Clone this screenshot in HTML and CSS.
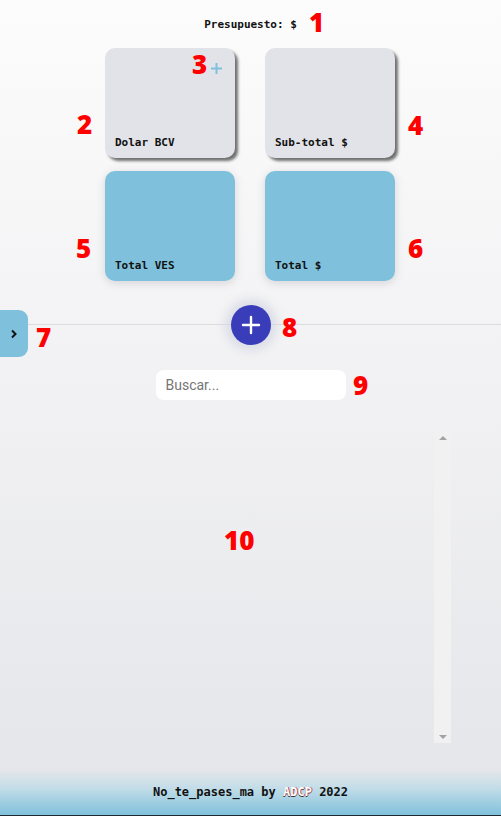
FILE: index.html
```html
<!DOCTYPE html>
<html lang="es">
<head>
<meta charset="utf-8">
<title>No_te_pases_ma</title>
<link rel="stylesheet" href="styles.css">
</head>
<body>
<div class="page">
  <header class="budget">Presupuesto: $</header>

  <section class="cards">
    <div class="card card-gray">
      <svg class="card-plus" width="13" height="13" viewBox="0 0 13 13"><path d="M6.5 1v11M1 6.5h11" stroke="#7fc1dc" stroke-width="2" fill="none"/></svg>
      <span class="card-label">Dolar BCV</span>
    </div>
    <div class="card card-gray"><span class="card-label">Sub-total $</span></div>
    <div class="card card-blue"><span class="card-label">Total VES</span></div>
    <div class="card card-blue"><span class="card-label">Total $</span></div>
  </section>

  <div class="divider">
    <button class="fab" aria-label="Agregar">
      <svg width="20" height="20" viewBox="0 0 20 20"><path d="M10 2v16M2 10h16" stroke="#fff" stroke-width="2.4" stroke-linecap="round" fill="none"/></svg>
    </button>
  </div>

  <button class="drawer-tab" aria-label="Abrir">
    <svg width="8" height="10" viewBox="0 0 8 10"><path d="M2 1.5l3.5 3.5L2 8.5" stroke="#111" stroke-width="2" fill="none"/></svg>
  </button>

  <div class="search-row">
    <input class="search" type="text" placeholder="Buscar...">
  </div>

  <div class="list">
    <div class="scrollbar">
      <span class="arrow arrow-up"></span>
      <span class="arrow arrow-down"></span>
    </div>
  </div>

  <footer class="footer">No_te_pases_ma by <span class="brand">ADCP</span> 2022</footer>

  <span class="note n1">1</span>
  <span class="note n2">2</span>
  <span class="note n3">3</span>
  <span class="note n4">4</span>
  <span class="note n5">5</span>
  <span class="note n6">6</span>
  <span class="note n7">7</span>
  <span class="note n8">8</span>
  <span class="note n9">9</span>
  <span class="note n10">10</span>
</div>
</body>
</html>
```
FILE: styles.css
```css
* { box-sizing: border-box; }
html, body { margin: 0; padding: 0; }
body {
  width: 501px;
  height: 816px;
  overflow: hidden;
  font-family: "DejaVu Sans Mono", "Liberation Mono", monospace;
}
.page {
  position: relative;
  width: 501px;
  height: 816px;
  display: flex;
  flex-direction: column;
  background: linear-gradient(180deg, #fcfcfc 0%, #f2f2f4 45%, #e4e5e9 100%);
}
.budget {
  padding-top: 18px;
  height: 48px;
  text-align: center;
  font-size: 11px;
  font-weight: bold;
  line-height: 14px;
  color: #111;
}
.cards {
  display: grid;
  grid-template-columns: 130px 130px;
  grid-auto-rows: 110px;
  column-gap: 30px;
  row-gap: 13px;
  justify-content: center;
  padding-right: 1px;
}
.card {
  position: relative;
  border-radius: 10px;
  display: flex;
  align-items: flex-end;
  padding: 0 10px 8px;
}
.card-gray {
  background: #e2e3e8;
  box-shadow: 3px 3px 3px rgba(0,0,0,0.55);
}
.card-blue {
  background: #7fc1dc;
  box-shadow: 0 2px 8px rgba(120,120,140,0.25);
}
.card-label {
  font-size: 11px;
  font-weight: bold;
  line-height: 14px;
  color: #111;
}
.card-plus {
  position: absolute;
  top: 14px;
  right: 12px;
}
.divider {
  margin-top: 24px;
  height: 40px;
  display: flex;
  justify-content: center;
  background: linear-gradient(180deg, transparent 19px, #dcdcdf 19px, #dcdcdf 20px, transparent 20px);
}
.fab {
  width: 40px;
  height: 40px;
  border-radius: 50%;
  border: none;
  padding: 0;
  background: #3a3dba;
  display: flex;
  align-items: center;
  justify-content: center;
  box-shadow: 0 0 10px 6px rgba(210,212,225,0.7);
}
.drawer-tab {
  position: absolute;
  left: 0;
  top: 310px;
  width: 28px;
  height: 47px;
  border: none;
  padding: 0;
  border-radius: 0 9px 9px 0;
  background: #7fc1dc;
  display: flex;
  align-items: center;
  justify-content: center;
}
.search-row {
  margin-top: 25px;
  display: flex;
  justify-content: center;
}
.search {
  width: 190px;
  height: 30px;
  border: none;
  border-radius: 8px;
  background: #fff;
  padding: 0 10px;
  font-family: "Roboto", "Liberation Sans", sans-serif;
  font-size: 14px;
  color: #333;
  outline: none;
}
.search::placeholder { color: #757575; }
.list {
  margin-top: 32px;
  height: 311px;
  display: flex;
  justify-content: flex-end;
  padding-right: 50px;
}
.scrollbar {
  width: 17px;
  height: 100%;
  background: #f1f1f1;
  display: flex;
  flex-direction: column;
  justify-content: space-between;
  align-items: center;
  padding: 4px 0;
}
.arrow {
  width: 0;
  height: 0;
  border-left: 4px solid transparent;
  border-right: 4px solid transparent;
}
.arrow-up { border-bottom: 4px solid #a3a3a3; }
.arrow-down { border-top: 4px solid #a3a3a3; }
.footer {
  margin-top: auto;
  height: 46px;
  padding-top: 15px;
  text-align: center;
  font-size: 12px;
  font-weight: bold;
  line-height: 14px;
  color: #111;
  background: linear-gradient(180deg, rgba(226,227,232,0) 0%, #c3dde8 40%, #80c1dc 100%);
  border-bottom: 1px solid #1c2a30;
}
.brand {
  color: #fff;
  text-shadow: 1px 0 0 #b84848, 0 1px 0 #3a3a3a;
}
.note {
  position: absolute;
  font-family: "Open Sans", "Lato", sans-serif;
  font-weight: 800;
  font-size: 26px;
  line-height: 26px;
  color: #f00;
}
.n1 { left: 309px; top: 9px; }
.n2 { left: 77px; top: 111px; }
.n3 { left: 192px; top: 51px; }
.n4 { left: 408px; top: 112px; }
.n5 { left: 76px; top: 235px; }
.n6 { left: 408px; top: 235px; }
.n7 { left: 36px; top: 324px; }
.n8 { left: 282px; top: 314px; }
.n9 { left: 353px; top: 372px; }
.n10 { left: 224px; top: 527px; }
```
